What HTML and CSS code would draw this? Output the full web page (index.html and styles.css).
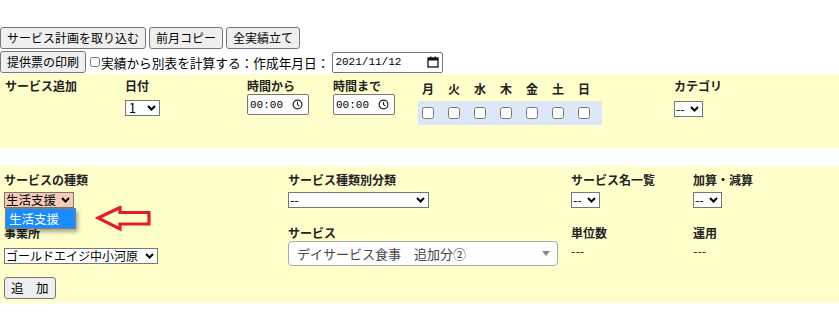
FILE: index.html
```html
<!DOCTYPE html>
<html lang="ja">
<head>
  <meta charset="UTF-8">
  <title>実績入力</title>
  <link rel="stylesheet" href="styles.css">
</head>
<body>

  <!-- 上部ボタン -->
  <div class="toolbar">
    <div class="tool-row">
      <button class="btn">サービス計画を取り込む</button>
      <button class="btn">前月コピー</button>
      <button class="btn">全実績立て</button>
    </div>
    <div class="tool-row">
      <button class="btn">提供票の印刷</button>
      <label class="calc-check"><input type="checkbox" class="small-check">実績から別表を計算する：作成年月日：</label>
      <div class="fake-input date-box">
        <span class="mono">2021/11/12</span>
        <svg class="cal-icon" width="12" height="12" viewBox="0 0 12 12">
          <rect x="1" y="2" width="10" height="9" fill="none" stroke="#111" stroke-width="1.3"/>
          <rect x="1" y="2" width="10" height="2.5" fill="#111"/>
          <rect x="3" y="0.5" width="1.4" height="2.5" fill="#111"/>
          <rect x="7.6" y="0.5" width="1.4" height="2.5" fill="#111"/>
        </svg>
      </div>
    </div>
  </div>

  <!-- サービス追加 -->
  <section class="panel panel-add">
    <div class="field">
      <span class="label">サービス追加</span>
    </div>
    <div class="field">
      <span class="label">日付</span>
      <div class="select sel-day">
        <span>1</span>
        <svg class="chev" width="9" height="6" viewBox="0 0 9 6"><path d="M1 1 L4.5 4.5 L8 1" fill="none" stroke="#000" stroke-width="2"/></svg>
      </div>
    </div>
    <div class="field">
      <span class="label">時間から</span>
      <div class="fake-input time-box">
        <span class="mono">00:00</span>
        <svg class="clock-icon" width="11" height="11" viewBox="0 0 11 11">
          <circle cx="5.5" cy="5.5" r="4.4" fill="none" stroke="#222" stroke-width="1.2"/>
          <path d="M5.5 2.8 V5.6 L7.4 7.2" fill="none" stroke="#222" stroke-width="1.1"/>
        </svg>
      </div>
    </div>
    <div class="field">
      <span class="label">時間まで</span>
      <div class="fake-input time-box">
        <span class="mono">00:00</span>
        <svg class="clock-icon" width="11" height="11" viewBox="0 0 11 11">
          <circle cx="5.5" cy="5.5" r="4.4" fill="none" stroke="#222" stroke-width="1.2"/>
          <path d="M5.5 2.8 V5.6 L7.4 7.2" fill="none" stroke="#222" stroke-width="1.1"/>
        </svg>
      </div>
    </div>
    <div class="field days">
      <div class="day-row day-names">
        <span>月</span><span>火</span><span>水</span><span>木</span><span>金</span><span>土</span><span>日</span>
      </div>
      <div class="day-row day-checks">
        <span><input type="checkbox"></span>
        <span><input type="checkbox"></span>
        <span><input type="checkbox"></span>
        <span><input type="checkbox"></span>
        <span><input type="checkbox"></span>
        <span><input type="checkbox"></span>
        <span><input type="checkbox"></span>
      </div>
    </div>
    <div class="field">
      <span class="label">カテゴリ</span>
      <div class="select sel-small sel-cat">
        <span>--</span>
        <svg class="chev" width="9" height="6" viewBox="0 0 9 6"><path d="M1 1 L4.5 4.5 L8 1" fill="none" stroke="#000" stroke-width="2"/></svg>
      </div>
    </div>
  </section>

  <!-- サービスの種類 -->
  <section class="panel panel-service">
    <div class="service-grid">
      <div class="field kind-field">
        <span class="label">サービスの種類</span>
        <div class="select sel-kind">
          <span>生活支援</span>
          <svg class="chev" width="9" height="6" viewBox="0 0 9 6"><path d="M1 1 L4.5 4.5 L8 1" fill="none" stroke="#000" stroke-width="2"/></svg>
        </div>
        <div class="dropdown-list">
          <div class="dropdown-item">生活支援</div>
        </div>
        <svg class="hint-arrow" width="58" height="27" viewBox="0 0 58 27">
          <polygon points="3,12 25,1.5 25,6.5 54,6.5 54,18 25,18 25,23" fill="none" stroke="#e81b23" stroke-width="3.2"/>
        </svg>
      </div>
      <div class="field">
        <span class="label">サービス種類別分類</span>
        <div class="select sel-class">
          <span>--</span>
          <svg class="chev" width="9" height="6" viewBox="0 0 9 6"><path d="M1 1 L4.5 4.5 L8 1" fill="none" stroke="#000" stroke-width="2"/></svg>
        </div>
      </div>
      <div class="field">
        <span class="label">サービス名一覧</span>
        <div class="select sel-small">
          <span>--</span>
          <svg class="chev" width="9" height="6" viewBox="0 0 9 6"><path d="M1 1 L4.5 4.5 L8 1" fill="none" stroke="#000" stroke-width="2"/></svg>
        </div>
      </div>
      <div class="field">
        <span class="label">加算・減算</span>
        <div class="select sel-small">
          <span>--</span>
          <svg class="chev" width="9" height="6" viewBox="0 0 9 6"><path d="M1 1 L4.5 4.5 L8 1" fill="none" stroke="#000" stroke-width="2"/></svg>
        </div>
      </div>

      <div class="field">
        <span class="label">事業所</span>
        <div class="select sel-office">
          <span>ゴールドエイジ中小河原</span>
          <svg class="chev" width="9" height="6" viewBox="0 0 9 6"><path d="M1 1 L4.5 4.5 L8 1" fill="none" stroke="#000" stroke-width="2"/></svg>
        </div>
      </div>
      <div class="field">
        <span class="label">サービス</span>
        <div class="combo">
          <span class="combo-text">デイサービス食事　追加分②</span>
          <span class="combo-arrow"></span>
        </div>
      </div>
      <div class="field">
        <span class="label">単位数</span>
        <span class="value">---</span>
      </div>
      <div class="field">
        <span class="label">運用</span>
        <span class="value">---</span>
      </div>
    </div>
    <button class="btn btn-add">追　加</button>
  </section>

</body>
</html>
```

FILE: styles.css
```css
body {
  margin: 0;
  padding-top: 27px;
  font-family: "Noto Sans CJK JP", sans-serif;
  font-size: 12.7px;
  color: #000;
  background-color: #fff;
}

.btn {
  font-family: "Noto Sans CJK JP", sans-serif;
  font-size: 12px;
  height: 22px;
  padding: 0 6px;
  line-height: 20px;
  color: #000;
  background-color: #efefef;
  border: 1px solid #767676;
  border-radius: 3px;
  margin: 0;
}

.toolbar {
  display: flex;
  flex-direction: column;
  gap: 2px;
}

.tool-row {
  display: flex;
  align-items: center;
  gap: 3px;
}

.calc-check {
  display: flex;
  align-items: center;
  line-height: 17px;
}

.small-check {
  width: 10px;
  height: 10px;
  margin: 0 1px 0 1px;
}

.fake-input {
  display: flex;
  align-items: center;
  justify-content: space-between;
  box-sizing: border-box;
  height: 21px;
  padding: 0 4px 0 2px;
  background-color: #fff;
  border: 1px solid #767676;
  border-radius: 2px;
}

.mono {
  font-family: "Liberation Mono", monospace;
  font-size: 11px;
}

.date-box {
  width: 111px;
  padding-right: 3px;
}

.time-box {
  width: 62px;
  padding-right: 5px;
}

/* パネル共通 */
.panel {
  background-color: #ffffcc;
  box-sizing: border-box;
}

.field {
  display: flex;
  flex-direction: column;
  align-items: flex-start;
}

.label {
  font-size: 12px;
  font-weight: bold;
  line-height: 17px;
  height: 17px;
  color: #222;
}

/* プルダウン */
.select {
  display: flex;
  align-items: center;
  justify-content: space-between;
  box-sizing: border-box;
  height: 16px;
  margin-top: 4px;
  padding: 0 3px 0 1px;
  font-size: 12.5px;
  line-height: 14px;
  background-color: #fff;
  border: 1px solid #767676;
}

.chev {
  flex-shrink: 0;
}

.sel-day { width: 35px; margin-top: 6px; padding-left: 3px; }
.sel-small { width: 29px; }
.sel-cat { margin-top: 7px; }
.sel-kind { width: 70px; background-color: #f8cab6; }
.sel-class { width: 141px; }
.sel-office { width: 154px; margin-top: 7px; font-size: 12px; }

/* サービス追加 */
.panel-add {
  margin-top: 1px;
  height: 74px;
  padding: 3px 0 0 5px;
  display: grid;
  grid-template-columns: 120px 122px 86px 85px 256px 1fr;
}

.days .day-row {
  display: grid;
  grid-template-columns: repeat(7, 26px);
}

.day-names {
  margin-top: 3px;
  font-size: 12px;
  font-weight: bold;
  line-height: 17px;
  color: #222;
}

.day-names span {
  padding-left: 4px;
}

.day-checks {
  margin-top: 4px;
  height: 24px;
  padding-right: 2px;
  background-color: #dce8f8;
  align-items: center;
}

.day-checks span {
  display: flex;
  padding-left: 4px;
}

.day-checks input {
  width: 12px;
  height: 12px;
  margin: 0;
}

/* サービスの種類 */
.panel-service {
  margin-top: 18px;
  height: 137px;
  padding: 5px 0 4px 4px;
}

.service-grid {
  display: grid;
  grid-template-columns: 284px 283px 122px 1fr;
  grid-template-rows: 53px auto;
}

.kind-field {
  position: relative;
}

.dropdown-list {
  position: absolute;
  left: 1px;
  top: 37px;
  width: 69px;
  background-color: #fff;
  border: 1px solid #808080;
  box-shadow: 2px 3px 4px rgba(0, 0, 0, 0.35);
  z-index: 2;
}

.dropdown-item {
  height: 19px;
  line-height: 19px;
  padding-left: 3px;
  font-size: 12.5px;
  color: #fff;
  background-color: #1a8cff;
}

.hint-arrow {
  position: absolute;
  left: 91px;
  top: 35px;
}

.combo {
  display: flex;
  align-items: center;
  justify-content: space-between;
  box-sizing: border-box;
  width: 270px;
  height: 25px;
  padding: 0 7px 0 8px;
  background-color: #fff;
  border: 1px solid #aaa;
  border-radius: 4px;
}

.combo-text {
  font-size: 13px;
  color: #444;
}

.combo-arrow {
  width: 0;
  height: 0;
  border-left: 4px solid transparent;
  border-right: 4px solid transparent;
  border-top: 5px solid #888;
}

.value {
  margin-top: 1px;
  line-height: 17px;
  color: #333;
}

.btn-add {
  margin-top: 11px;
  padding: 0 6px;
  font-size: 12.5px;
}
```
